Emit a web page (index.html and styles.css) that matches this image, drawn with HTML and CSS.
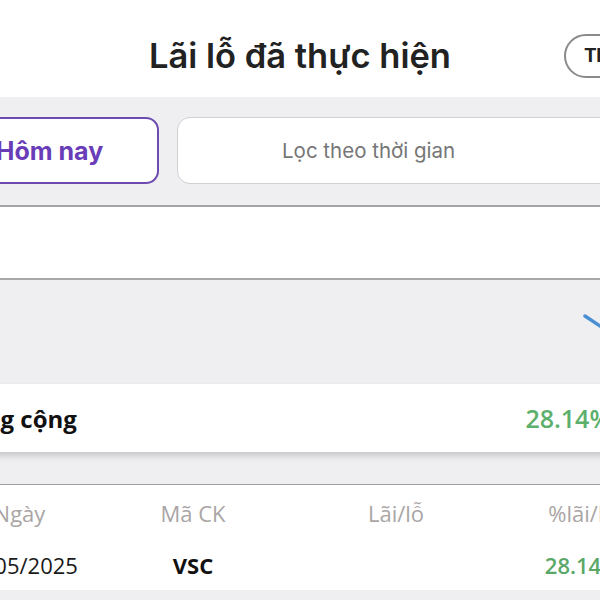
FILE: index.html
```html
<!DOCTYPE html>
<html lang="vi">
<head>
<meta charset="utf-8">
<title>Lãi lỗ đã thực hiện</title>
<link rel="stylesheet" href="styles.css">
</head>
<body>
<div class="app">
  <header class="header">
    <h1 class="title">Lãi lỗ đã thực hiện</h1>
    <button class="pill">Thoát</button>
  </header>
  <div class="tabs">
    <div class="tab tab-active">Hôm nay</div>
    <div class="tab tab-filter">Lọc theo thời gian</div>
  </div>
  <div class="chart-head"></div>
  <div class="chart">
    <svg class="chart-svg" width="720" height="104" viewBox="0 0 720 104">
      <line x1="645" y1="36" x2="672" y2="54" stroke="#4a8fd2" stroke-width="3.5" stroke-linecap="round"/>
    </svg>
  </div>
  <div class="total">
    <span class="total-label">Tổng cộng</span>
    <span class="total-value">28.14%</span>
  </div>
  <div class="table">
    <div class="row row-head">
      <span>Ngày</span>
      <span>Mã CK</span>
      <span>Lãi/lỗ</span>
      <span>%lãi/lỗ</span>
    </div>
    <div class="row row-data">
      <span>13/05/2025</span>
      <span class="code">VSC</span>
      <span></span>
      <span class="pct">28.14%</span>
    </div>
  </div>
</div>
</body>
</html>
```
FILE: styles.css
```css
html, body {
  margin: 0;
  padding: 0;
}
body {
  width: 600px;
  height: 600px;
  overflow: hidden;
  background: #efeff2;
  font-family: "Open Sans", "Noto Sans", sans-serif;
}
.app {
  width: 720px;
  margin-left: -60px;
}
.header {
  height: 97px;
  box-sizing: border-box;
  padding-top: 14px;
  background: #fff;
  display: grid;
  grid-template-columns: minmax(0, 1fr) auto minmax(0, 1fr);
  align-items: center;
}
.title {
  grid-column: 2;
  margin: 0;
  font-family: Inter, "Noto Sans", sans-serif;
  font-weight: 600;
  font-size: 34.5px;
  color: #222;
  white-space: nowrap;
}
.pill {
  grid-column: 3;
  justify-self: start;
  margin-left: 113px;
  height: 44px;
  box-sizing: border-box;
  border: 2px solid #8a8a8a;
  border-radius: 24px;
  background: #fff;
  padding: 0 18px;
  font-family: Inter, "Noto Sans", sans-serif;
  font-weight: 700;
  font-size: 19px;
  letter-spacing: -0.5px;
  color: #222;
  white-space: nowrap;
}
.tabs {
  background: #efeff2;
  padding: 20px 0 21px;
  display: flex;
  gap: 18px;
}
.tab {
  height: 67px;
  box-sizing: border-box;
  border-radius: 13px;
  background: #fff;
  display: flex;
  align-items: center;
  font-family: Inter, "Noto Sans", sans-serif;
  white-space: nowrap;
}
.tab-active {
  width: 219px;
  border: 2px solid #6e4bb0;
  justify-content: center;
  color: #6a3db8;
  font-weight: 700;
  font-size: 25px;
}
.tab-filter {
  flex: 1;
  border: 1.5px solid #d0d0d5;
  padding-left: 104px;
  color: #767676;
  font-size: 20.5px;
}
.chart-head {
  height: 71px;
  background: #fff;
  border-top: 2px solid #a4a4a4;
  border-bottom: 2px solid #a8a8a8;
}
.chart {
  height: 104px;
  background: #efeff2;
}
.chart-svg {
  display: block;
}
.total {
  height: 68px;
  background: #fff;
  box-shadow: 0 4px 6px rgba(0, 0, 0, 0.16);
  display: flex;
  align-items: center;
  justify-content: space-between;
  padding: 0 49px 0 16px;
  position: relative;
}
.total-label {
  font-weight: 700;
  font-size: 24px;
  color: #111;
}
.total-value {
  font-weight: 600;
  font-size: 25px;
  color: #5cb06c;
}
.table {
  margin-top: 32px;
  border-top: 1.5px solid #a0a0a0;
  background: #fff;
}
.row {
  display: grid;
  grid-template-columns: 159px 188px 218px 1fr;
  align-items: center;
  font-size: 22px;
}
.row span {
  text-align: center;
  white-space: nowrap;
}
.row-head {
  height: 55px;
  color: #aaa5a5;
}
.row-data {
  height: 50px;
  color: #1a1a1a;
}
.code {
  font-weight: 700;
  color: #111;
}
.pct {
  font-weight: 600;
  color: #5aa868;
}
```
